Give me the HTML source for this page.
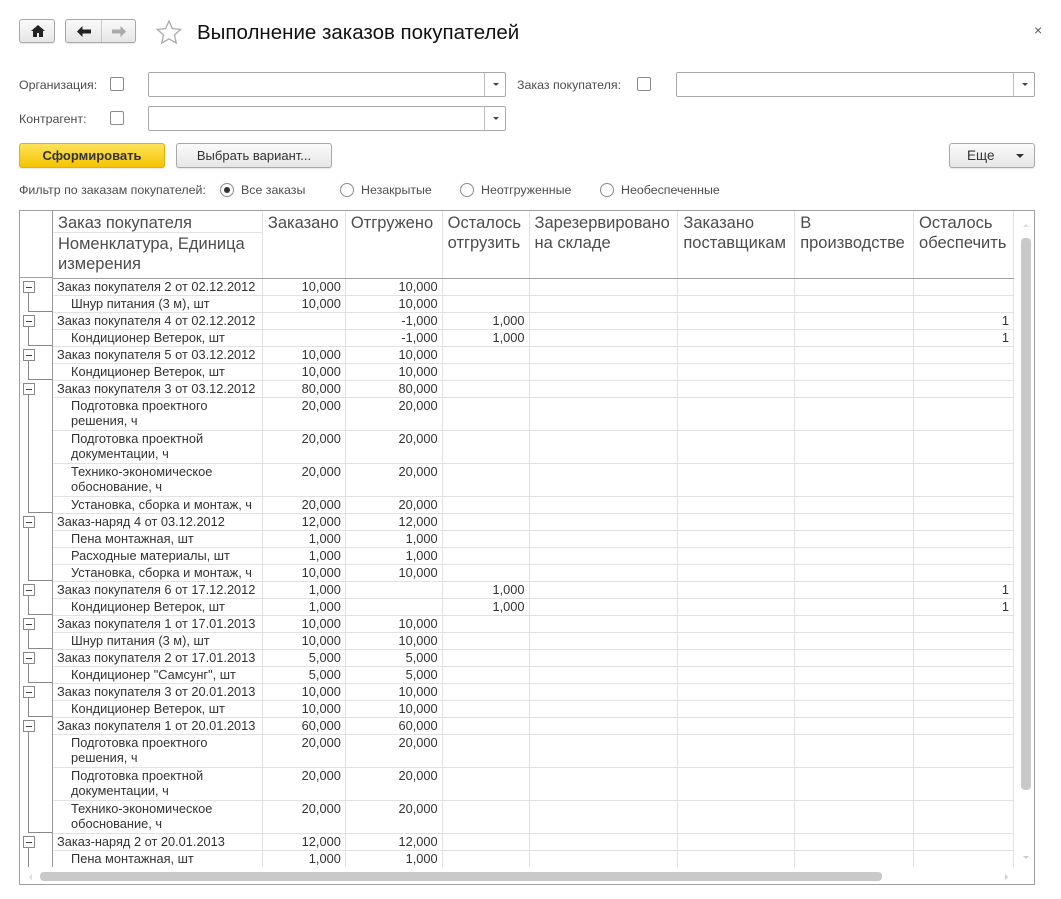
<!DOCTYPE html>
<html><head><meta charset="utf-8">
<style>
*{box-sizing:border-box;margin:0;padding:0}
body{width:1061px;height:899px;background:#fff;font-family:"Liberation Sans",Arial,sans-serif;font-size:12px;color:#333;position:relative;overflow:hidden}
.a{position:absolute}
.btn{position:absolute;border:1px solid #a8a8a8;border-radius:3px;background:linear-gradient(#fafafa,#e6e6e6);box-shadow:0 1px 1px rgba(0,0,0,.1)}
.lbl{position:absolute;color:#4d4d4d;font-size:12.4px}
.cb{position:absolute;width:14px;height:14px;border:1px solid #8c8c8c;border-radius:2px;background:#fff}
.inp{position:absolute;height:25px;border:1px solid #a9a9a9;border-radius:2px;background:#fff}
.inp .dd{position:absolute;right:0;top:0;width:21px;height:23px;border-left:1px solid #bdbdbd}
.inp .dd:after{content:"";position:absolute;left:8px;top:10px;border-left:3px solid transparent;border-right:3px solid transparent;border-top:3px solid #444}
.rad{position:absolute;width:14px;height:14px;border:1px solid #8c8c8c;border-radius:50%;background:#fff}
table{border-collapse:collapse;table-layout:fixed;position:absolute;left:52px;top:211px}
td{border:1px solid #e2e2e2;height:17px;line-height:15px;padding:0 4px;vertical-align:top;white-space:nowrap;overflow:hidden;color:#333;font-size:12.8px}
td.n{text-align:right}
td.c{padding-left:18px}
tr.d td{height:33px;white-space:normal}
th{font-weight:normal;font-size:16.5px;color:#4d4d4d;text-align:left;vertical-align:top;padding:2px 5px;line-height:20px;border-left:1px solid #e2e2e2;border-right:1px solid #e2e2e2;border-bottom:1px solid #a0a0a0;height:67px}
.mb{position:absolute;left:23px;width:12px;height:12px;border:1px solid #888;background:#fff}
.mb:after{content:"";position:absolute;left:2px;right:2px;top:5px;height:1px;background:#444}
.tl{position:absolute;left:28px;border-left:1px solid #888;border-bottom:1px solid #888;width:24px}
</style></head><body>
<div class="btn" style="left:19px;top:19px;width:36px;height:24px"><svg class="a" style="left:11px;top:5px" width="14" height="12" viewBox="0 0 14 12"><path d="M7 0L0 6h2v6h4V8h2v4h4V6h2z" fill="#222"/></svg></div>
<div class="btn" style="left:65px;top:19px;width:71px;height:24px"><div class="a" style="left:35px;top:0;width:1px;height:22px;background:#c8c8c8"></div>
<svg class="a" style="left:11px;top:6px" width="14" height="11" viewBox="0 0 14 11"><path d="M0 5.5L5.5 0v3.5H14v4H5.5V11z" fill="#222"/></svg>
<svg class="a" style="left:46px;top:6px" width="14" height="11" viewBox="0 0 14 11"><path d="M14 5.5L8.5 0v3.5H0v4h8.5V11z" fill="#aaa"/></svg></div>
<svg class="a" style="left:156px;top:20px" width="26" height="25" viewBox="0 0 26 25"><path d="M13 1l3.4 7.6 8.3.8-6.3 5.6 1.9 8.1L13 18.9 5.7 23.1l1.9-8.1L1.3 9.4l8.3-.8z" fill="none" stroke="#aaa" stroke-width="1.3"/></svg>
<div class="a" style="left:197px;top:21px;font-size:20.5px;color:#111">Выполнение заказов покупателей</div>
<div class="a" style="left:1034px;top:22px;font-size:14px;color:#555">×</div>

<div class="lbl" style="left:19px;top:78px">Организация:</div><div class="cb" style="left:110px;top:77px"></div>
<div class="inp" style="left:148px;top:72px;width:358px"><div class="dd"></div></div>
<div class="lbl" style="left:517px;top:78px">Заказ покупателя:</div><div class="cb" style="left:637px;top:77px"></div>
<div class="inp" style="left:676px;top:72px;width:359px"><div class="dd"></div></div>
<div class="lbl" style="left:19px;top:112px">Контрагент:</div><div class="cb" style="left:110px;top:111px"></div>
<div class="inp" style="left:148px;top:106px;width:358px"><div class="dd"></div></div>

<div class="btn" style="left:19px;top:143px;width:146px;height:25px;background:linear-gradient(#fde35b,#f5c400);border-color:#e0b400;text-align:center;line-height:23px;font-weight:bold;font-size:13px;color:#333">Сформировать</div>
<div class="btn" style="left:176px;top:143px;width:156px;height:25px;text-align:center;line-height:23px;font-size:13px;color:#333">Выбрать вариант...</div>
<div class="btn" style="left:949px;top:143px;width:86px;height:25px;font-size:13.5px;color:#333"><span class="a" style="left:17px;top:4px">Еще</span><div class="a" style="left:66px;top:10px;border-left:4px solid transparent;border-right:4px solid transparent;border-top:4px solid #333"></div></div>

<div class="lbl" style="left:19px;top:183px">Фильтр по заказам покупателей:</div>
<div class="rad" style="left:220px;top:183px"><div class="a" style="left:3px;top:3px;width:6px;height:6px;border-radius:50%;background:#333"></div></div>
<div class="lbl" style="left:241px;top:183px">Все заказы</div>
<div class="rad" style="left:340px;top:183px"></div><div class="lbl" style="left:361px;top:183px">Незакрытые</div>
<div class="rad" style="left:460px;top:183px"></div><div class="lbl" style="left:481px;top:183px">Неотгруженные</div>
<div class="rad" style="left:600px;top:183px"></div><div class="lbl" style="left:621px;top:183px">Необеспеченные</div>

<div class="a" style="left:19px;top:210px;width:1016px;height:675px;border:1px solid #a0a0a0"></div>
<div class="a" style="left:19px;top:277px;width:33px;height:1px;background:#a0a0a0"></div>
<div class="a" style="left:52px;top:211px;width:1px;height:656px;background:#999;z-index:2"></div>
<div style="position:absolute;left:0;top:0;width:1014px;height:867px;overflow:hidden">
<table>
<colgroup><col style="width:210px"><col style="width:83px"><col style="width:97px"><col style="width:87px"><col style="width:149px"><col style="width:117px"><col style="width:119px"><col style="width:100px"></colgroup>
<tr><th style="padding:0"><div style="padding:2px 5px 0;height:22px;border-bottom:1px solid #e2e2e2">Заказ покупателя</div><div style="padding:1px 5px;line-height:20px">Номенклатура, Единица измерения</div></th><th>Заказано</th><th>Отгружено</th><th>Осталось отгрузить</th><th>Зарезервировано на складе</th><th>Заказано поставщикам</th><th>В производстве</th><th>Осталось обеспечить</th></tr>
<tr><td>Заказ покупателя 2 от 02.12.2012</td><td class="n">10,000</td><td class="n">10,000</td><td></td><td></td><td></td><td></td><td></td></tr>
<tr><td class="c">Шнур питания (3 м), шт</td><td class="n">10,000</td><td class="n">10,000</td><td></td><td></td><td></td><td></td><td></td></tr>
<tr><td>Заказ покупателя 4 от 02.12.2012</td><td class="n"></td><td class="n">-1,000</td><td class="n">1,000</td><td></td><td></td><td></td><td class="n">1</td></tr>
<tr><td class="c">Кондиционер Ветерок, шт</td><td class="n"></td><td class="n">-1,000</td><td class="n">1,000</td><td></td><td></td><td></td><td class="n">1</td></tr>
<tr><td>Заказ покупателя 5 от 03.12.2012</td><td class="n">10,000</td><td class="n">10,000</td><td></td><td></td><td></td><td></td><td></td></tr>
<tr><td class="c">Кондиционер Ветерок, шт</td><td class="n">10,000</td><td class="n">10,000</td><td></td><td></td><td></td><td></td><td></td></tr>
<tr><td>Заказ покупателя 3 от 03.12.2012</td><td class="n">80,000</td><td class="n">80,000</td><td></td><td></td><td></td><td></td><td></td></tr>
<tr class="d"><td class="c">Подготовка проектного<br>решения, ч</td><td class="n">20,000</td><td class="n">20,000</td><td></td><td></td><td></td><td></td><td></td></tr>
<tr class="d"><td class="c">Подготовка проектной<br>документации, ч</td><td class="n">20,000</td><td class="n">20,000</td><td></td><td></td><td></td><td></td><td></td></tr>
<tr class="d"><td class="c">Технико-экономическое<br>обоснование, ч</td><td class="n">20,000</td><td class="n">20,000</td><td></td><td></td><td></td><td></td><td></td></tr>
<tr><td class="c">Установка, сборка и монтаж, ч</td><td class="n">20,000</td><td class="n">20,000</td><td></td><td></td><td></td><td></td><td></td></tr>
<tr><td>Заказ-наряд 4 от 03.12.2012</td><td class="n">12,000</td><td class="n">12,000</td><td></td><td></td><td></td><td></td><td></td></tr>
<tr><td class="c">Пена монтажная, шт</td><td class="n">1,000</td><td class="n">1,000</td><td></td><td></td><td></td><td></td><td></td></tr>
<tr><td class="c">Расходные материалы, шт</td><td class="n">1,000</td><td class="n">1,000</td><td></td><td></td><td></td><td></td><td></td></tr>
<tr><td class="c">Установка, сборка и монтаж, ч</td><td class="n">10,000</td><td class="n">10,000</td><td></td><td></td><td></td><td></td><td></td></tr>
<tr><td>Заказ покупателя 6 от 17.12.2012</td><td class="n">1,000</td><td class="n"></td><td class="n">1,000</td><td></td><td></td><td></td><td class="n">1</td></tr>
<tr><td class="c">Кондиционер Ветерок, шт</td><td class="n">1,000</td><td class="n"></td><td class="n">1,000</td><td></td><td></td><td></td><td class="n">1</td></tr>
<tr><td>Заказ покупателя 1 от 17.01.2013</td><td class="n">10,000</td><td class="n">10,000</td><td></td><td></td><td></td><td></td><td></td></tr>
<tr><td class="c">Шнур питания (3 м), шт</td><td class="n">10,000</td><td class="n">10,000</td><td></td><td></td><td></td><td></td><td></td></tr>
<tr><td>Заказ покупателя 2 от 17.01.2013</td><td class="n">5,000</td><td class="n">5,000</td><td></td><td></td><td></td><td></td><td></td></tr>
<tr><td class="c">Кондиционер "Самсунг", шт</td><td class="n">5,000</td><td class="n">5,000</td><td></td><td></td><td></td><td></td><td></td></tr>
<tr><td>Заказ покупателя 3 от 20.01.2013</td><td class="n">10,000</td><td class="n">10,000</td><td></td><td></td><td></td><td></td><td></td></tr>
<tr><td class="c">Кондиционер Ветерок, шт</td><td class="n">10,000</td><td class="n">10,000</td><td></td><td></td><td></td><td></td><td></td></tr>
<tr><td>Заказ покупателя 1 от 20.01.2013</td><td class="n">60,000</td><td class="n">60,000</td><td></td><td></td><td></td><td></td><td></td></tr>
<tr class="d"><td class="c">Подготовка проектного<br>решения, ч</td><td class="n">20,000</td><td class="n">20,000</td><td></td><td></td><td></td><td></td><td></td></tr>
<tr class="d"><td class="c">Подготовка проектной<br>документации, ч</td><td class="n">20,000</td><td class="n">20,000</td><td></td><td></td><td></td><td></td><td></td></tr>
<tr class="d"><td class="c">Технико-экономическое<br>обоснование, ч</td><td class="n">20,000</td><td class="n">20,000</td><td></td><td></td><td></td><td></td><td></td></tr>
<tr><td>Заказ-наряд 2 от 20.01.2013</td><td class="n">12,000</td><td class="n">12,000</td><td></td><td></td><td></td><td></td><td></td></tr>
<tr><td class="c">Пена монтажная, шт</td><td class="n">1,000</td><td class="n">1,000</td><td></td><td></td><td></td><td></td><td></td></tr>
<tr><td class="c">Расходные материалы, шт</td><td class="n">1,000</td><td class="n">1,000</td><td></td><td></td><td></td><td></td><td></td></tr>
</table>
</div>
<!-- tree -->
<div class="tl" style="top:292px;height:20px"></div><div class="mb" style="top:281px"></div>
<div class="tl" style="top:326px;height:20px"></div><div class="mb" style="top:315px"></div>
<div class="tl" style="top:360px;height:20px"></div><div class="mb" style="top:349px"></div>
<div class="tl" style="top:394px;height:119px"></div><div class="mb" style="top:383px"></div>
<div class="tl" style="top:527px;height:54px"></div><div class="mb" style="top:516px"></div>
<div class="tl" style="top:595px;height:20px"></div><div class="mb" style="top:584px"></div>
<div class="tl" style="top:629px;height:20px"></div><div class="mb" style="top:618px"></div>
<div class="tl" style="top:663px;height:20px"></div><div class="mb" style="top:652px"></div>
<div class="tl" style="top:697px;height:20px"></div><div class="mb" style="top:686px"></div>
<div class="tl" style="top:731px;height:102px"></div><div class="mb" style="top:720px"></div>
<div class="a" style="left:28px;top:847px;width:1px;height:20px;background:#888"></div><div class="mb" style="top:836px"></div>
<!-- scrollbars -->
<div class="a" style="left:1021px;top:238px;width:10px;height:552px;border-radius:4px;background:#c9c9c9"></div>
<div class="a" style="left:1023px;top:224px;border-left:3px solid transparent;border-right:3px solid transparent;border-bottom:3px solid #ddd"></div>
<div class="a" style="left:1023px;top:856px;border-left:3px solid transparent;border-right:3px solid transparent;border-top:3px solid #ccc"></div>
<div class="a" style="left:40px;top:872px;width:842px;height:9px;border-radius:4px;background:#c9c9c9"></div>
<div class="a" style="left:29px;top:874px;border-top:3px solid transparent;border-bottom:3px solid transparent;border-right:3px solid #ddd"></div>
<div class="a" style="left:1005px;top:874px;border-top:3px solid transparent;border-bottom:3px solid transparent;border-left:3px solid #ccc"></div>
</body></html>
